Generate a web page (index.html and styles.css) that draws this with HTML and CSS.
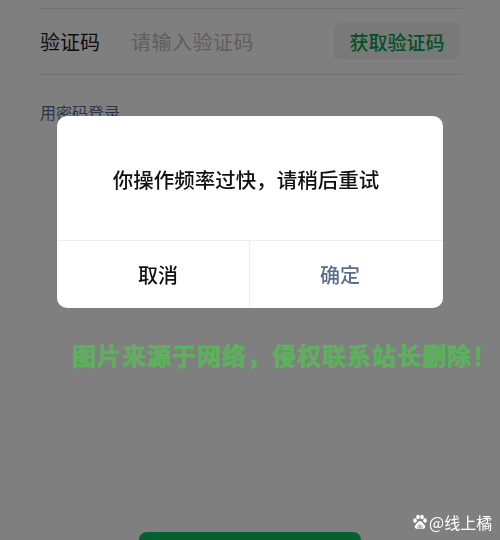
FILE: index.html
```html
<!DOCTYPE html>
<html lang="zh-CN">
<head>
    <meta charset="UTF-8">
    <title>验证码登录</title>
    <link rel="stylesheet" href="styles.css">
</head>
<body>
    <div id="page">
        <div class="code-row">
            <span class="label">验证码</span>
            <span class="placeholder">请输入验证码</span>
            <button class="get-code">获取验证码</button>
        </div>
        <a class="switch">用密码登录</a>
        <button class="submit"></button>
    </div>
    <div id="mask">
        <div id="dialog">
            <div class="msg">你操作频率过快，请稍后重试</div>
            <div class="btns">
                <button class="cancel">取消</button>
                <button class="ok">确定</button>
            </div>
        </div>
    </div>
    <div class="notice">图片来源于网络，侵权联系站长删除！</div>
    <div class="mark">
        <svg width="16" height="16" viewBox="0 0 16 16">
            <ellipse cx="3" cy="6.5" rx="1.8" ry="2.2" fill="#fff"/>
            <ellipse cx="6" cy="3" rx="1.8" ry="2.2" fill="#fff"/>
            <ellipse cx="10" cy="3" rx="1.8" ry="2.2" fill="#fff"/>
            <ellipse cx="13" cy="6.5" rx="1.8" ry="2.2" fill="#fff"/>
            <path d="M8 7c-2 0-3 2.5-4.5 4-1.3 1.4-.6 3.8 1.6 3.8 1.2 0 1.8-.4 2.9-.4s1.7.4 2.9.4c2.2 0 2.9-2.4 1.6-3.8C11 9.5 10 7 8 7z" fill="#fff"/>
            <text x="8" y="13.6" font-size="4.5" text-anchor="middle" fill="#808080" font-family="Liberation Sans, sans-serif" font-weight="bold">du</text>
        </svg>
        <span>@线上橘</span>
    </div>
</body>
</html>
```

FILE: styles.css
```css
html, body{
    margin: 0;
    padding: 0;
    height: 100%;
    overflow: hidden;
}
body{
    font-family: "Noto Sans CJK SC", "Noto Sans", sans-serif;
    background-color: #fff;
}
button{
    font-family: inherit;
    border: none;
    outline: none;
    background: none;
    padding: 0;
}
#page{
    padding: 8px 37px 0 40px;
    height: 100%;
    box-sizing: border-box;
    display: flex;
    flex-direction: column;
}
.code-row{
    height: 67px;
    border-top: 1px solid #e5e5e5;
    border-bottom: 1px solid #e5e5e5;
    display: flex;
    align-items: center;
    box-sizing: border-box;
}
.code-row .label{
    font-size: 20px;
    color: #1a1a1a;
    width: 91px;
}
.code-row .placeholder{
    font-size: 20px;
    color: #bdbdbd;
    letter-spacing: 0.5px;
    flex: 1;
}
.get-code{
    width: 126px;
    height: 36px;
    margin-right: 3px;
    background-color: #f2f2f2;
    border-radius: 5px;
    color: #07a14f;
    font-size: 19px;
    font-weight: 500;
    margin-top: -1px;
}
.switch{
    margin-top: 25px;
    font-size: 16px;
    color: #576b95;
    line-height: 24px;
}
.submit{
    margin: auto 0 0 99px;
    width: 222px;
    height: 48px;
    flex-shrink: 0;
    transform: translateY(40px);
    background-color: #07c160;
    border-radius: 8px;
}
#mask{
    position: fixed;
    top: 0;
    left: 0;
    width: 100%;
    height: 100%;
    background-color: rgba(0,0,0,0.5);
}
#dialog{
    width: 386px;
    height: 192px;
    margin: 116px 0 0 57px;
    background-color: #fff;
    border-radius: 10px;
    display: flex;
    flex-direction: column;
    overflow: hidden;
}
#dialog .msg{
    height: 125px;
    display: flex;
    align-items: center;
    justify-content: center;
    font-size: 20.5px;
    font-weight: 500;
    color: #111;
    padding: 2px 8px 0 0;
    box-sizing: border-box;
    border-bottom: 1px solid #ededed;
}
#dialog .btns{
    flex: 1;
    display: flex;
}
#dialog .btns button{
    width: 193px;
    flex: none;
    box-sizing: border-box;
    font-size: 20px;
    font-weight: 500;
}
#dialog .cancel{
    color: #111;
    border-right: 1px solid #ededed;
    padding-left: 10px;
}
#dialog .ok{
    color: #5a6d8e;
    padding-right: 13px;
}
.notice{
    position: absolute;
    top: 337px;
    left: 72px;
    font-size: 24px;
    font-weight: bold;
    color: #6aa86a;
    -webkit-text-stroke: 0.6px #4cc24c;
    white-space: nowrap;
    letter-spacing: 1px;
}
.mark{
    position: absolute;
    top: 510px;
    left: 412px;
    display: flex;
    align-items: center;
    gap: 1px;
    color: #fff;
    font-size: 16px;
}
```
